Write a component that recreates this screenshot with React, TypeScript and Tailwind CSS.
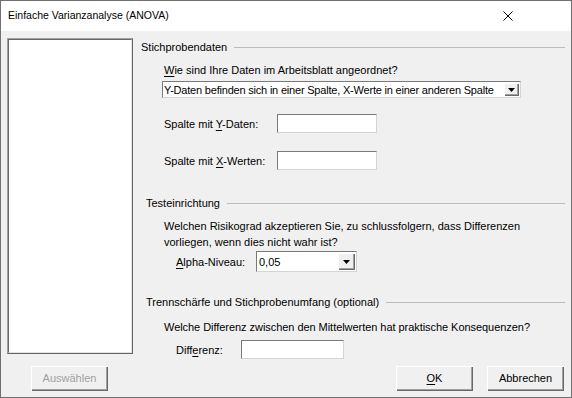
import React from 'react';

const raised =
  'shadow-[inset_1px_1px_0_#ffffff,inset_-1px_-1px_0_#696969,inset_-2px_-2px_0_#a0a0a0] bg-[#f0f0f0]';

const Arrow = () => (
  <svg width="7" height="4" viewBox="0 0 7 4">
    <path d="M0 0H7L3.5 4Z" fill="#000" />
  </svg>
);

const GroupHeader = ({ title, indent }: { title: string; indent?: boolean }) => (
  <div className={`flex items-center h-[16px] gap-[7px] ${indent ? 'pl-[5px]' : ''}`}>
    <span className="whitespace-nowrap">{title}</span>
    <div className="flex-1 h-px bg-[#bcbcbc]" />
  </div>
);

const TextBox = ({ width }: { width: string }) => (
  <div className={`${width} h-[19px] bg-white border border-[#7a7a7a] border-r-[#d4d4d4] border-b-[#d4d4d4]`} />
);

const Button = ({ children, disabled }: { children: React.ReactNode; disabled?: boolean }) => (
  <div
    className={`w-[77px] h-[25px] flex items-center justify-center ${raised} ${
      disabled ? 'text-[#a0a0a0]' : 'text-black'
    }`}
  >
    {children}
  </div>
);

export default function App() {
  return (
    <div className="w-[572px] h-[398px] bg-[#f0f0f0] border border-[#707070] flex flex-col text-[11px] text-black font-['Liberation_Sans',Arial,sans-serif]">
      {/* Titelleiste */}
      <div className="h-[30px] bg-white flex items-center justify-between pl-[7px] pr-[58px]">
        <span className="text-[10.5px]">Einfache Varianzanalyse (ANOVA)</span>
        <svg width="10" height="10" viewBox="0 0 10 10">
          <path d="M0.5 0.5L9.5 9.5M9.5 0.5L0.5 9.5" stroke="#000" strokeWidth="1" />
        </svg>
      </div>

      <div className="flex-1 flex flex-col px-[6px]">
        <div className="flex h-[329px]">
          {/* Variablenliste */}
          <div className="mt-[7px] w-[126px] h-[316px] border border-[#a0a0a0] border-r-[#646464] border-b-[#646464]">
            <div className="w-full h-full bg-white border border-[#696969] border-r-[#e3e3e3] border-b-[#e3e3e3]" />
          </div>

          <div className="ml-[8px] flex-1 flex flex-col pt-[8px] leading-[16px]">
            <GroupHeader title="Stichprobendaten" />
            <div className="mt-[7px] pl-[23px] h-[16px]">
              <span className="underline underline-offset-2">W</span>ie sind Ihre Daten im Arbeitsblatt angeordnet?
            </div>
            <div className="mt-[3px] ml-[21px] w-[359px] h-[17px] bg-white border border-[#7a7a7a] border-r-[#d4d4d4] border-b-[#d4d4d4] flex items-center">
              <span className="flex-1 pl-[1px] whitespace-nowrap tracking-[-0.2px]">
                Y-Daten befinden sich in einer Spalte, X-Werte in einer anderen Spalte
              </span>
              <div className={`w-[15px] h-[13px] mr-px flex items-center justify-center ${raised}`}>
                <Arrow />
              </div>
            </div>

            <div className="mt-[16px] pl-[23px] flex items-center">
              <span className="w-[113px]">
                Spalte mit <span className="underline underline-offset-2">Y</span>-Daten:
              </span>
              <TextBox width="w-[100px]" />
            </div>
            <div className="mt-[18px] pl-[23px] flex items-center">
              <span className="w-[113px]">
                Spalte mit <span className="underline underline-offset-2">X</span>-Werten:
              </span>
              <TextBox width="w-[100px]" />
            </div>

            <div className="mt-[25px]">
              <GroupHeader title="Testeinrichtung" indent />
            </div>
            <div className="mt-[7px] pl-[23px]">
              Welchen Risikograd akzeptieren Sie, zu schlussfolgern, dass Differenzen
              <br />
              vorliegen, wenn dies nicht wahr ist?
            </div>
            <div className="mt-[1px] pl-[35px] flex items-center">
              <span className="w-[80px]">
                <span className="underline underline-offset-2">A</span>lpha-Niveau:
              </span>
              <div className="w-[101px] h-[21px] bg-white border border-[#7a7a7a] border-r-[#d4d4d4] border-b-[#d4d4d4] flex items-center">
                <span className="flex-1 pl-[2px]">0,05</span>
                <div className={`w-[17px] h-[17px] mr-px flex items-center justify-center ${raised}`}>
                  <Arrow />
                </div>
              </div>
            </div>

            <div className="mt-[22px]">
              <GroupHeader title="Trennschärfe und Stichprobenumfang (optional)" indent />
            </div>
            <div className="mt-[9px] pl-[23px] h-[16px] tracking-[-0.05px]">
              Welche Differenz zwischen den Mittelwerten hat praktische Konsequenzen?
            </div>
            <div className="mt-[5px] pl-[35px] flex items-center">
              <span className="w-[65px]">
                Diff<span className="underline underline-offset-2">e</span>renz:
              </span>
              <TextBox width="w-[103px]" />
            </div>
          </div>
        </div>

        {/* Schaltflächen */}
        <div className="mt-[6px] flex justify-between">
          <div className="ml-[24px]">
            <Button disabled>Auswählen</Button>
          </div>
          <div className="flex gap-[14px] mr-px">
            <Button>
              <span className="underline underline-offset-2">O</span>K
            </Button>
            <Button>Abbrechen</Button>
          </div>
        </div>
      </div>
    </div>
  );
}
